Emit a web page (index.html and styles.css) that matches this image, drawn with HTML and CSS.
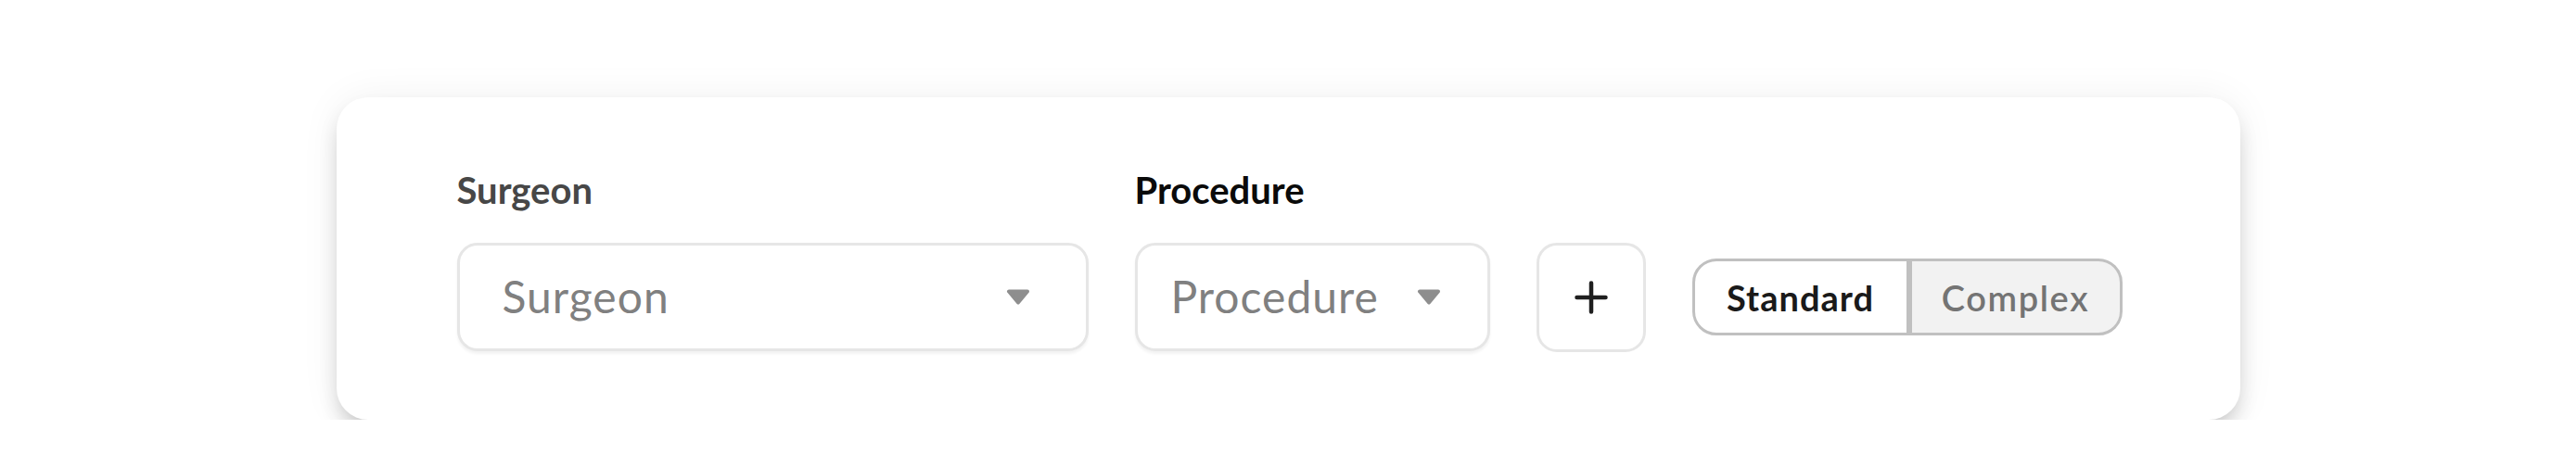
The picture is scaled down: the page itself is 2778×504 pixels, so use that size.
FILE: index.html
```html
<!DOCTYPE html>
<html lang="en">
<head>
<meta charset="utf-8">
<title>Case filter</title>
<link rel="stylesheet" href="styles.css">
</head>
<body>
<main class="page">
  <section class="card">
    <div class="form">
      <label class="label label-muted label-surgeon">Surgeon</label>
      <label class="label label-strong label-procedure">Procedure</label>
      <div class="select select-surgeon">
        <span class="placeholder">Surgeon</span>
        <svg class="caret" viewBox="0 0 26 17" width="26" height="17" aria-hidden="true"><path d="M3 2.5 H23 L13 14.5 Z" fill="#8e8e8e" stroke="#8e8e8e" stroke-width="4" stroke-linejoin="round"/></svg>
      </div>
      <div class="select select-procedure">
        <span class="placeholder">Procedure</span>
        <svg class="caret" viewBox="0 0 26 17" width="26" height="17" aria-hidden="true"><path d="M3 2.5 H23 L13 14.5 Z" fill="#8e8e8e" stroke="#8e8e8e" stroke-width="4" stroke-linejoin="round"/></svg>
      </div>
      <button class="add-btn" type="button" aria-label="Add">
        <svg viewBox="0 0 36 36" width="36" height="36" aria-hidden="true"><path d="M18 2.5 V33.5 M2.5 18 H33.5" stroke="#1f1f1f" stroke-width="4.5" stroke-linecap="round" fill="none"/></svg>
      </button>
      <div class="toggle">
        <button class="seg seg-left seg-active" type="button">Standard</button>
        <button class="seg seg-right" type="button">Complex</button>
      </div>
    </div>
  </section>
</main>
</body>
</html>
```

FILE: styles.css
```css
html, body {
  margin: 0;
  padding: 0;
  background: #ffffff;
  font-family: "Lato", "Open Sans", sans-serif;
}

.page {
  display: flex;
  justify-content: center;
  padding-top: 105px;
}

.card {
  background: #ffffff;
  border-radius: 34px;
  padding: 76px 127px 74px 130px;
  box-shadow: 0 14px 24px -6px rgba(0, 0, 0, 0.24), 0 0 44px rgba(0, 0, 0, 0.06);
}

.form {
  display: grid;
  grid-template-columns: 681px 383px 118px 464px;
  grid-template-rows: 48px 117px;
  column-gap: 50px;
  row-gap: 33px;
  align-items: center;
}

.label {
  grid-row: 1;
  font-size: 40px;
  line-height: 48px;
  font-weight: 700;
}

.label-surgeon { grid-column: 1; }
.label-procedure { grid-column: 2; }

.label-muted { color: #474747; }
.label-strong { color: #0a0a0a; }

.select {
  grid-row: 2;
  box-sizing: border-box;
  height: 117px;
  border: 3px solid #e6e6e6;
  border-radius: 22px;
  background: #ffffff;
  box-shadow: 0 3px 3px rgba(0, 0, 0, 0.05);
  display: flex;
  align-items: center;
  justify-content: space-between;
}

.select-surgeon { grid-column: 1; padding: 0 60px 3px 46px; }
.select-procedure { grid-column: 2; padding: 0 50px 3px 36px; }

.select .caret { margin-top: 3px; }

.placeholder {
  font-size: 48px;
  letter-spacing: 1px;
  color: #808080;
  font-weight: 400;
}

.caret { display: block; }

.add-btn {
  grid-row: 2;
  grid-column: 3;
  box-sizing: border-box;
  width: 118px;
  height: 118px;
  border: 3px solid #e6e6e6;
  border-radius: 22px;
  background: #ffffff;
  padding: 0;
  display: flex;
  align-items: center;
  justify-content: center;
}

.add-btn svg { display: block; }

.toggle {
  grid-row: 2;
  grid-column: 4;
  display: flex;
  height: 83px;
}

.seg {
  box-sizing: border-box;
  height: 83px;
  border: 3px solid #c0c0c0;
  font-family: inherit;
  font-size: 38px;
  letter-spacing: 1px;
  padding: 0;
  display: flex;
  align-items: center;
  justify-content: center;
}

.seg-left {
  width: 234px;
  border-radius: 26px 0 0 26px;
  background: #ffffff;
}

.seg-right {
  width: 230px;
  border-radius: 0 26px 26px 0;
  background: #f2f2f2;
  color: #747474;
  font-family: "Lato Semibold", "Lato", sans-serif;
  font-weight: 600;
  letter-spacing: 1.6px;
}

.seg-active {
  color: #1a1a1a;
  font-weight: 700;
}
```
